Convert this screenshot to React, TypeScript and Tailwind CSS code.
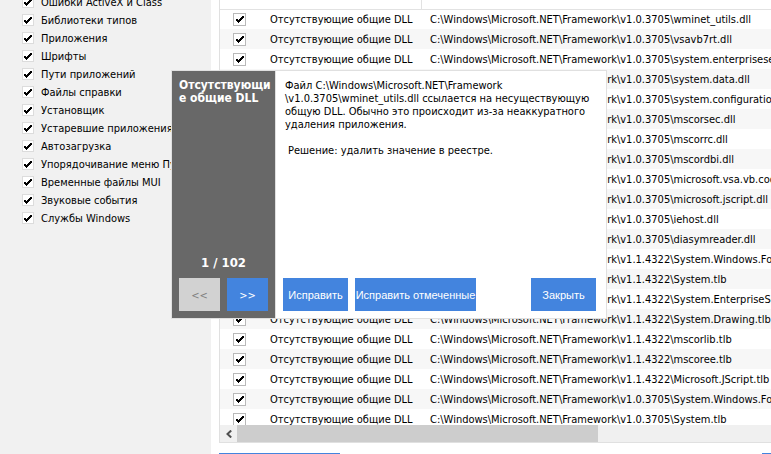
import { clsx } from 'clsx'
import { useState } from 'react'

const CATEGORIES = [
  'Ошибки ActiveX и Class',
  'Библиотеки типов',
  'Приложения',
  'Шрифты',
  'Пути приложений',
  'Файлы справки',
  'Установщик',
  'Устаревшие приложения',
  'Автозагрузка',
  'Упорядочивание меню Пуск',
  'Временные файлы MUI',
  'Звуковые события',
  'Службы Windows',
]

const FRAMEWORK = 'C:\\Windows\\Microsoft.NET\\Framework\\'

const FILES = [
  'v1.0.3705\\wminet_utils.dll',
  'v1.0.3705\\vsavb7rt.dll',
  'v1.0.3705\\system.enterpriseservices.dll',
  'v1.0.3705\\system.data.dll',
  'v1.0.3705\\system.configuration.install.dll',
  'v1.0.3705\\mscorsec.dll',
  'v1.0.3705\\mscorrc.dll',
  'v1.0.3705\\mscordbi.dll',
  'v1.0.3705\\microsoft.vsa.vb.codedomprocessor.dll',
  'v1.0.3705\\microsoft.jscript.dll',
  'v1.0.3705\\iehost.dll',
  'v1.0.3705\\diasymreader.dll',
  'v1.1.4322\\System.Windows.Forms.tlb',
  'v1.1.4322\\System.tlb',
  'v1.1.4322\\System.EnterpriseServices.tlb',
  'v1.1.4322\\System.Drawing.tlb',
  'v1.1.4322\\mscorlib.tlb',
  'v1.1.4322\\mscoree.tlb',
  'v1.1.4322\\Microsoft.JScript.tlb',
  'v1.0.3705\\System.Windows.Forms.tlb',
  'v1.0.3705\\System.tlb',
]

interface CheckBoxProps {
  id?: string
  label?: string
  boxClass: string
}

function CheckBox({ id, label, boxClass }: CheckBoxProps) {
  const [checked, setChecked] = useState(true)

  return (
    <span className="grid flex-none place-items-center">
      <input
        id={id}
        type="checkbox"
        aria-label={label}
        checked={checked}
        onChange={() => setChecked(!checked)}
        className={clsx('col-start-1 row-start-1 appearance-none border bg-white', boxClass)}
      />
      {checked && (
        <svg
          viewBox="0 0 8 7"
          className="pointer-events-none col-start-1 row-start-1 h-[7px] w-2"
          shapeRendering="crispEdges"
        >
          <path d="M0 3h2v1h1v-1h1v-1h1v-1h1v-1h2v2h-1v1h-1v1h-1v1h-1v1h-1v1h-1v-1h-1v-1H0z" />
        </svg>
      )}
    </span>
  )
}

function Sidebar() {
  return (
    <aside className="w-[211px] flex-none overflow-hidden bg-[#f1f1f1] pl-[22px]">
      <ul className="-mt-[7px]">
        {CATEGORIES.map((name, i) => (
          <li key={name} className="flex h-[18px] items-center gap-[7px]">
            <CheckBox id={`category-${i}`} boxClass="size-3 border-[#dcdcdc]" />
            <label htmlFor={`category-${i}`} className="whitespace-nowrap pt-0.5">
              {name}
            </label>
          </li>
        ))}
      </ul>
    </aside>
  )
}

function ResultsTable() {
  return (
    <div className="min-h-0 flex-1 overflow-hidden">
      <table className="w-full table-fixed border-collapse whitespace-nowrap">
        <colgroup>
          <col className="w-[50px]" />
          <col className="w-[151px]" />
          <col />
        </colgroup>
        <thead>
          <tr className="h-[9px] border-b border-[#e2e2e2]">
            <td />
            <td className="border-r border-[#e2e2e2]" />
            <td />
          </tr>
        </thead>
        <tbody>
          {FILES.map((file) => (
            <tr key={file} className="h-5 even:bg-[#f7f7f7]">
              <td className="p-0 pl-[13px]">
                <div className="flex">
                  <CheckBox label={file} boxClass="size-[13px] border-[#b9b9b9]" />
                </div>
              </td>
              <td className="p-0 pt-0.5">Отсутствующие общие DLL</td>
              <td className="overflow-hidden p-0 pl-[9px] pt-0.5">{FRAMEWORK + file}</td>
            </tr>
          ))}
        </tbody>
      </table>
    </div>
  )
}

function ScrollBar() {
  return (
    <div className="flex h-[17px] flex-none bg-[#f0f0f0]">
      <button type="button" aria-label="Влево" className="flex w-[17px] items-center justify-center">
        <svg viewBox="0 0 6 8" className="h-2 w-1.5" fill="none" stroke="#505050" strokeWidth="2">
          <path d="M5.2 .5 1.5 4 5.2 7.5" />
        </svg>
      </button>
      <div className="w-[361px] bg-[#cdcdcd]" />
    </div>
  )
}

interface DialogButtonProps {
  children: string
  className: string
  disabled?: boolean
}

function DialogButton({ children, className, disabled }: DialogButtonProps) {
  return (
    <button
      type="button"
      disabled={disabled}
      className={clsx(
        'h-[33px] whitespace-nowrap pt-0.5 text-center',
        disabled ? 'bg-[#d2d2d2] text-[#808080]' : 'bg-[#4384de] text-white',
        className,
      )}
    >
      {children}
    </button>
  )
}

function DetailsDialog() {
  return (
    <div
      role="dialog"
      className="absolute left-[171px] top-[70px] flex h-[249px] w-[436px] border border-[#e0e0e0] bg-white leading-[13px]"
    >
      <div className="flex w-[103px] flex-none flex-col bg-[#686868] px-[7px] pb-[7px] pt-2 text-white">
        <h2 className="-mr-1 break-all text-[12px] font-bold">Отсутствующие общие DLL</h2>
        <p className="mb-[9px] mt-auto text-center text-[13px] font-bold">1 / 102</p>
        <div className="flex justify-between">
          <DialogButton disabled className="w-[41px]">
            {'<<'}
          </DialogButton>
          <DialogButton className="w-[41px]">{'>>'}</DialogButton>
        </div>
      </div>

      <div className="flex flex-1 flex-col border-l border-[#e0e0e0] pb-[7px] pl-[7px] pr-2.5 pt-2">
        <div className="whitespace-nowrap pl-[2px]">
          <p>
            Файл C:\Windows\Microsoft.NET\Framework
            <br />
            \v1.0.3705\wminet_utils.dll ссылается на несуществующую
            <br />
            общую DLL. Обычно это происходит из-за неаккуратного
            <br />
            удаления приложения.
          </p>
          <p className="pl-[3px] pt-[13px]">Решение: удалить значение в реестре.</p>
        </div>
        <div className="mt-auto flex gap-[7px] font-['Liberation_Sans',sans-serif]">
          <DialogButton className="w-[65px]">Исправить</DialogButton>
          <DialogButton className="w-[121px]">Исправить отмеченные</DialogButton>
          <DialogButton className="ml-auto w-[65px]">Закрыть</DialogButton>
        </div>
      </div>
    </div>
  )
}

export default function App() {
  return (
    <div className="relative flex h-screen overflow-hidden bg-white font-['DejaVu_Sans_Condensed','DejaVu_Sans',sans-serif] text-[11px] leading-[14px] text-black">
      <Sidebar />
      <main className="flex min-w-0 flex-1 flex-col pl-2">
        <div className="flex min-h-0 flex-1 flex-col border-b border-l border-[#e0e0e0]">
          <ResultsTable />
          <ScrollBar />
        </div>
        {/* Action bar, only its top edge is inside the window */}
        <div className="-mb-8 mt-2.5 flex h-[33px] flex-none justify-between">
          <button type="button" aria-label="Исправить" className="w-[121px] bg-[#4384de]" />
          <button type="button" aria-label="Закрыть" className="w-[9px] bg-[#4384de]" />
        </div>
      </main>
      <DetailsDialog />
    </div>
  )
}
